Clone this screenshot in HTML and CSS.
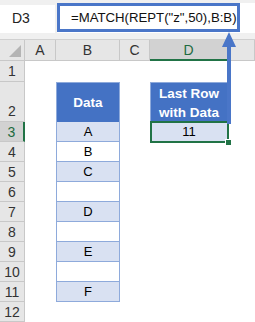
FILE: index.html
```html
<!DOCTYPE html>
<html lang="en">
<head>
    <meta charset="UTF-8">
    <meta name="viewport" content="width=device-width, initial-scale=1.0">
    <title>Last Row with Data</title>
    <link rel="stylesheet" href="styles.css">
</head>
<body>
    <div class="app">
        <div class="formulaBar">
            <div class="nameBox">D3</div>
            <div class="formulaArea">
                <div class="formula">=MATCH(REPT("z",50),B:B)</div>
            </div>
        </div>

        <div class="sheet">
            <div class="corner"></div>
            <div class="colHead">A</div>
            <div class="colHead">B</div>
            <div class="colHead">C</div>
            <div class="colHead selected">D</div>
            <div class="colHead"></div>

            <div class="rowHead">1</div>
            <div></div><div></div><div></div><div></div><div></div>

            <div class="rowHead tall">2</div>
            <div></div>
            <div class="dataHead">Data</div>
            <div></div>
            <div class="dataHead">Last Row<br>with Data</div>
            <div></div>

            <div class="rowHead active">3</div>
            <div></div>
            <div class="cell alt">A</div>
            <div></div>
            <div class="cell alt result">11</div>
            <div></div>

            <div class="rowHead">4</div>
            <div></div><div class="cell">B</div><div></div><div></div><div></div>

            <div class="rowHead">5</div>
            <div></div><div class="cell alt">C</div><div></div><div></div><div></div>

            <div class="rowHead">6</div>
            <div></div><div class="cell"></div><div></div><div></div><div></div>

            <div class="rowHead">7</div>
            <div></div><div class="cell alt">D</div><div></div><div></div><div></div>

            <div class="rowHead">8</div>
            <div></div><div class="cell"></div><div></div><div></div><div></div>

            <div class="rowHead">9</div>
            <div></div><div class="cell alt">E</div><div></div><div></div><div></div>

            <div class="rowHead">10</div>
            <div></div><div class="cell"></div><div></div><div></div><div></div>

            <div class="rowHead">11</div>
            <div></div><div class="cell alt">F</div><div></div><div></div><div></div>

            <div class="rowHead">12</div>
            <div></div><div></div><div></div><div></div><div></div>
        </div>

        <!-- arrow from the result cell up to the formula -->
        <svg class="arrow" width="20" height="95" viewBox="0 0 20 95">
            <rect x="5" y="14" width="4" height="78" fill="#4a76c8"/>
            <polygon points="0,15 14,15 7,0" fill="#4a76c8"/>
        </svg>
    </div>
</body>
</html>
```

FILE: styles.css
```css
*{
    box-sizing: border-box;
}
body{
    margin: 0;
    background: #fff;
    font-family: "Liberation Sans", Arial, sans-serif;
    color: #000;
}
.app{
    position: relative;
    width: 255px;
    height: 322px;
    overflow: hidden;
}
.formulaBar{
    display: flex;
    height: 40px;
    padding-top: 3px;
    background: #f0f0f0;
    border-bottom: 1px solid #d0d0d0;
}
.nameBox{
    width: 55px;
    height: 28px;
    margin-top: 2px;
    padding-left: 12px;
    background: #fff;
    font-size: 14px;
    line-height: 27px;
    color: #222;
}
.formulaArea{
    flex: 1;
    height: 30px;
    margin-left: 2px;
    background: #fff;
}
.formula{
    width: 183px;
    height: 29px;
    border: 3px solid #4a76c8;
    padding-left: 11px;
    font-size: 13.2px;
    line-height: 23px;
    color: #111;
    white-space: nowrap;
}
.sheet{
    display: grid;
    grid-template-columns: 25px 31px 64px 30px 78px 1fr;
    grid-template-rows: 21px 21px 40px repeat(10, 20px);
    font-size: 13px;
}
.corner{
    position: relative;
    background: #e6e6e6;
    border-right: 1px solid #c8c8c8;
    border-bottom: 1px solid #c8c8c8;
}
.corner::after{
    content: "";
    position: absolute;
    right: 3px;
    bottom: 3px;
    border-left: 12px solid transparent;
    border-bottom: 12px solid #b4b4b4;
}
.colHead{
    background: #e6e6e6;
    border-right: 1px solid #c8c8c8;
    border-bottom: 1px solid #c8c8c8;
    text-align: center;
    font-size: 14px;
    line-height: 20px;
    color: #333;
}
.colHead.selected{
    background: #d2d2d2;
    border-bottom: 2px solid #217346;
    color: #1e6b40;
}
.rowHead{
    background: #e6e6e6;
    border-right: 1px solid #c8c8c8;
    border-bottom: 1px solid #c8c8c8;
    text-align: center;
    font-size: 14px;
    line-height: 20px;
    color: #333;
}
.rowHead.tall{
    line-height: 58px;
}
.rowHead.active{
    background: #d2d2d2;
    border-right: 2px solid #217346;
    color: #1e6b40;
}
.dataHead{
    display: flex;
    align-items: center;
    justify-content: center;
    background: #4472c4;
    border: 1px solid #8eaadb;
    border-bottom: none;
    color: #fff;
    font-weight: bold;
    font-size: 13.5px;
    line-height: 19px;
    text-align: center;
}
.cell{
    border-left: 1px solid #8eaadb;
    border-right: 1px solid #8eaadb;
    border-bottom: 1px solid #8eaadb;
    text-align: center;
    line-height: 19px;
}
.cell.alt{
    background: #d9e1f2;
}
.result{
    position: relative;
    border: none;
}
.result::before{
    content: "";
    position: absolute;
    left: 0;
    top: -1px;
    right: -1px;
    bottom: -1px;
    border: 2px solid #217346;
}
.result::after{
    content: "";
    position: absolute;
    right: -4px;
    bottom: -4px;
    width: 5px;
    height: 5px;
    background: #217346;
    border: 1px solid #fff;
}
.arrow{
    position: absolute;
    left: 222px;
    top: 32px;
}
```
